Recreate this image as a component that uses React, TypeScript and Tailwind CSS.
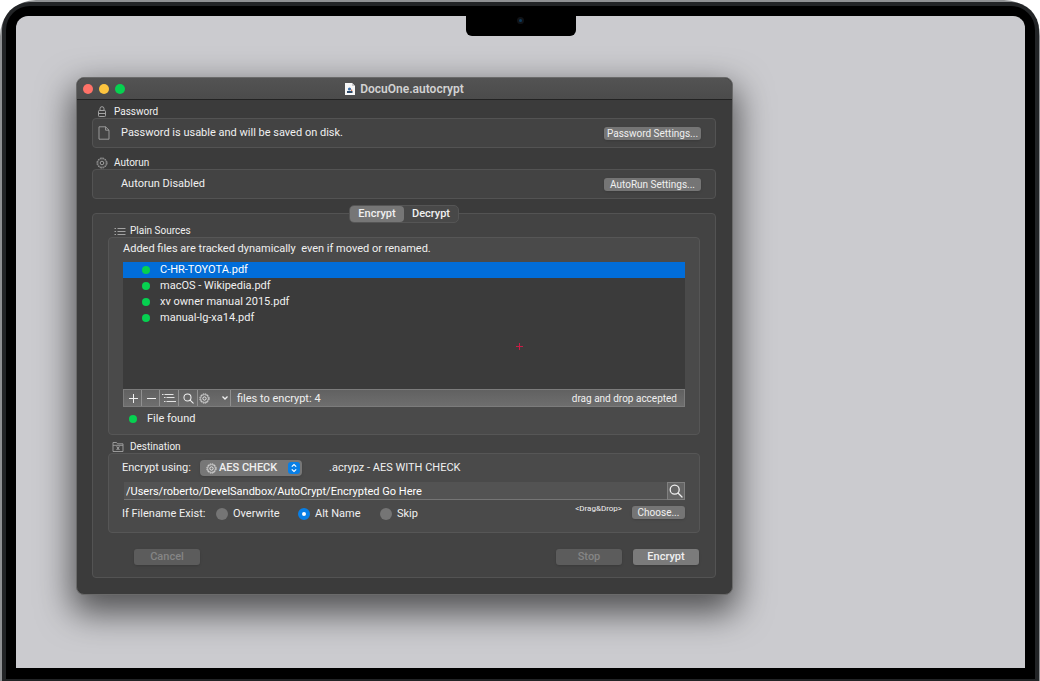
import { useState } from "react";
import type { ReactNode } from "react";

const files = [
  "C-HR-TOYOTA.pdf",
  "macOS - Wikipedia.pdf",
  "xv owner manual 2015.pdf",
  "manual-lg-xa14.pdf",
];

const conflictOptions = ["Overwrite", "Alt Name", "Skip"];

interface IconProps {
  className?: string;
}

function LockIcon({ className }: IconProps) {
  return (
    <svg viewBox="0 0 10 12" className={className} fill="none" stroke="currentColor" strokeWidth="1">
      <rect x="1.5" y="4.5" width="7" height="6" rx="0.8" />
      <path d="M3 4.5V2.7a2 2 0 0 1 4 0v1.800M2 7.500h6" />
    </svg>
  );
}

function PageIcon({ className }: IconProps) {
  return (
    <svg viewBox="0 0 12 14" className={className} fill="none" stroke="currentColor" strokeWidth="0.9">
      <path d="M1 .8h6.6L11 4.2v9H1zM7.6.8v3.4H11" />
    </svg>
  );
}

function GearIcon({ className }: IconProps) {
  return (
    <svg viewBox="0 0 12 12" className={className} fill="none" stroke="currentColor">
      <circle cx="6" cy="6" r="5" strokeWidth="1" strokeDasharray="1.8 0.8" />
      <circle cx="6" cy="6" r="4.2" strokeWidth="0.6" />
      <circle cx="6" cy="6" r="1.8" strokeWidth="1" />
    </svg>
  );
}

function ListIcon({ className }: IconProps) {
  return (
    <svg viewBox="0 0 12 9" className={className} fill="none" stroke="currentColor" strokeWidth="1">
      <path d="M0.5 1.5H2M3.5 1.5h8M0.5 4.5H2M3.5 4.5h8M0.5 7.5H2M3.5 7.5h8" />
    </svg>
  );
}

function OutlineIcon({ className }: IconProps) {
  return (
    <svg viewBox="0 0 14 10" className={className} fill="none" stroke="currentColor" strokeWidth="0.9">
      <path d="M0 1.5h1.5M2.5 1.5h9M2 4.5h1.5M4.5 4.5h8M2 8.5h1.5M4.5 8.5H14" />
    </svg>
  );
}

function SearchIcon({ className }: IconProps) {
  return (
    <svg viewBox="0 0 14 14" className={className} fill="none" stroke="currentColor" strokeWidth="1.3">
      <circle cx="5.7" cy="5.7" r="4.5" />
      <path d="m9 9 4 4" strokeLinecap="round" />
    </svg>
  );
}

function FolderIcon({ className }: IconProps) {
  return (
    <svg viewBox="0 0 12 12" className={className} fill="none" stroke="currentColor" strokeWidth="0.9">
      <path d="M1 10.5v-9h3.5l1 1.3H11v7.7zM1 4.3h10M4.5 5.5l3 3.5M7.5 5.5l-3 3.5M6 5.5v3.5" />
    </svg>
  );
}

function DocumentIcon({ className }: IconProps) {
  return (
    <svg viewBox="0 0 10 12" className={className}>
      <path d="M0 0h7l3 3v9H0z" fill="#f7f7f7" />
      <path d="M7 0v3h3z" fill="#c9c9c9" />
      <circle cx="4.5" cy="6" r="1.6" fill="#3c6fa8" />
      <path d="M2 8h5.5v2H2z" fill="#2f4a68" />
      <path d="M6 6.5h1.2V8H6z" fill="#d8784a" />
    </svg>
  );
}

function GroupTitle({ icon, children }: { icon: ReactNode; children: ReactNode }) {
  return (
    <h2 className="flex items-center gap-1 pl-0.5 text-[10px] leading-3">
      <span className="flex w-4 justify-center text-[#a3a3a3]">{icon}</span>
      {children}
    </h2>
  );
}

function SmallButton({ className, children }: { className: string; children: ReactNode }) {
  return (
    <button
      type="button"
      className={`h-[13px] shrink-0 rounded-[3px] bg-[#757575] text-[10px] leading-[13px] whitespace-nowrap shadow-sm ${className}`}
    >
      {children}
    </button>
  );
}

function ActionButton({ disabled, children }: { disabled?: boolean; children: ReactNode }) {
  return (
    <button
      type="button"
      disabled={disabled}
      className="h-4 w-[66px] rounded-[3px] bg-[#7b7b7b] text-[11px] leading-4 font-medium shadow-sm disabled:bg-[#5c5c5c] disabled:text-[#858585]"
    >
      {children}
    </button>
  );
}

function SourcesGroup() {
  const [selected, setSelected] = useState(0);

  return (
    <section className="mt-0.5">
      <GroupTitle icon={<ListIcon className="ml-1 h-[9px] w-3" />}>Plain Sources</GroupTitle>

      <div className="rounded border border-[#565656] bg-[#4a4a4a] px-[14px] pt-[3px] pb-[7px]">
        <p className="text-[11px] leading-4 whitespace-pre">
          Added files are tracked dynamically  even if moved or renamed.
        </p>

        <div className="relative mt-[5px] h-[127px] bg-[#3b3b3b]">
          <ul>
            {files.map((file, index) => (
              <li key={file}>
                <button
                  type="button"
                  onClick={() => setSelected(index)}
                  className={`flex h-4 w-full items-center gap-[10px] pl-[19px] text-[11px] leading-4 ${
                    selected === index ? "bg-[#016dd9] text-white" : ""
                  }`}
                >
                  <span className="size-2 rounded-full bg-[#06d150]" />
                  {file}
                </button>
              </li>
            ))}
          </ul>
          <svg viewBox="0 0 7 7" className="absolute top-[81px] left-[70%] size-[7px]" stroke="#c91c45">
            <path d="M3.5 0v7M0 3.5h7" />
          </svg>
        </div>

        <div className="flex h-[18px] items-stretch border border-[#7c7c7c] bg-linear-to-b from-[#616161] to-[#6e6e6e] text-[11px]">
          <button type="button" aria-label="Add file" className="flex w-[18px] items-center justify-center border-r border-[#909090]">
            <svg viewBox="0 0 10 10" className="size-[10px]" stroke="currentColor">
              <path d="M5.5 1v9M1 5.5h9" />
            </svg>
          </button>
          <button type="button" aria-label="Remove file" className="flex w-[18px] items-center justify-center border-r border-[#909090]">
            <svg viewBox="0 0 10 10" className="size-[10px]" stroke="currentColor">
              <path d="M1 5.5h9" />
            </svg>
          </button>
          <button type="button" aria-label="Show list" className="flex w-[19px] items-center justify-center border-r border-[#909090]">
            <OutlineIcon className="h-[10px] w-[14px]" />
          </button>
          <button type="button" aria-label="Reveal file" className="flex w-[19px] items-center justify-center border-r border-[#909090]">
            <SearchIcon className="size-[11px]" />
          </button>
          <button type="button" aria-label="More actions" className="flex w-[33px] items-center justify-between border-r border-[#909090] px-px">
            <GearIcon className="size-[11px]" />
            <svg viewBox="0 0 8 6" className="h-[6px] w-2" fill="none" stroke="currentColor" strokeWidth="1.3">
              <path d="m1.5 1.5 2.5 2.5 2.5-2.5" />
            </svg>
          </button>
          <span className="pl-[6px] leading-[18px]">files to encrypt: {files.length}</span>
          <span className="ml-auto pr-[7px] text-[10px] leading-[18px]">drag and drop accepted</span>
        </div>

        <div className="mt-1 flex items-center gap-[10px] pl-[6px] text-[11px] leading-4">
          <span className="size-2 rounded-full bg-[#06d150]" />
          File found
        </div>
      </div>
    </section>
  );
}

function DestinationGroup() {
  const [conflict, setConflict] = useState("Alt Name");
  const [path, setPath] = useState("/Users/roberto/DevelSandbox/AutoCrypt/Encrypted Go Here");

  return (
    <section className="mt-[6px]">
      <GroupTitle icon={<FolderIcon className="size-3" />}>Destination</GroupTitle>

      <div className="rounded border border-[#565656] bg-[#4a4a4a] pt-[6px] pr-[14px] pb-[10px] pl-[13px] text-[11px] leading-4">
        <div className="flex items-center">
          <label htmlFor="method" className="w-[78px]">
            Encrypt using:
          </label>
          <div className="relative">
            <select
              id="method"
              className="block h-4 w-[102px] appearance-none rounded bg-[#777777] pl-[19px] text-[11px] leading-4 font-medium shadow-sm"
            >
              <option>AES CHECK</option>
            </select>
            <GearIcon className="pointer-events-none absolute top-[3px] left-[6px] size-[11px]" />
            <span className="pointer-events-none absolute top-0.5 right-0.5 flex size-3 items-center justify-center rounded-[3px] bg-[#087fe6]">
              <svg viewBox="0 0 8 10" className="h-[10px] w-2" fill="none" stroke="white" strokeWidth="1.2">
                <path d="M1.8 3.6 4 1.5l2.2 2.1M1.8 6.4 4 8.5l2.2-2.1" />
              </svg>
            </span>
          </div>
          <span className="ml-[27px]">.acrypz - AES WITH CHECK</span>
        </div>

        <div className="mt-[6px] flex items-center pl-0.5">
          <input
            type="text"
            aria-label="Destination folder"
            value={path}
            onChange={(event) => setPath(event.target.value)}
            className="h-[18px] min-w-0 flex-1 border-b border-[#757575] bg-[#535353] pt-0.5 pl-0.5 text-[11px] text-white outline-none"
          />
          <button
            type="button"
            aria-label="Show in Finder"
            className="flex size-[18px] items-center justify-center border border-[#808080] bg-[#656565]"
          >
            <SearchIcon className="size-[14px]" />
          </button>
        </div>

        <div className="mt-[6px] flex items-start">
          <fieldset className="flex">
            <legend className="float-left w-[94px]">If Filename Exist:</legend>
            {conflictOptions.map((option) => (
              <label key={option} className="flex w-[82px] items-center gap-[5px]">
                <input
                  type="radio"
                  name="conflict"
                  checked={conflict === option}
                  onChange={() => setConflict(option)}
                  className="size-3 appearance-none rounded-full bg-[#757575] checked:border-4 checked:border-[#087fe6] checked:bg-white"
                />
                {option}
              </label>
            ))}
          </fieldset>
          <span className="ml-auto pr-[10px] text-[8px] leading-[6px]">&lt;Drag&amp;Drop&gt;</span>
          <SmallButton className="w-[53px]">Choose...</SmallButton>
        </div>
      </div>
    </section>
  );
}

function AutocryptWindow() {
  const [mode, setMode] = useState("Encrypt");

  return (
    <div className="w-full max-w-[657px] rounded-lg border border-[#6a6a6a] bg-[#3b3b3b] shadow-[0_14px_34px_4px_rgba(0,0,0,0.6)]">
      <header className="flex h-[22px] items-center rounded-t-lg border-b border-[#222222] bg-linear-to-b from-[#535353] to-[#4b4b4b] px-[6px]">
        <div className="flex flex-1 gap-[6px]">
          <button type="button" aria-label="Close" className="size-[10px] rounded-full bg-[#ff7268]" />
          <button type="button" aria-label="Minimize" className="size-[10px] rounded-full bg-[#fdc53f]" />
          <button type="button" aria-label="Zoom" className="size-[10px] rounded-full bg-[#06d150]" />
        </div>
        <h1 className="flex items-center gap-[5px] text-xs leading-4 font-semibold text-[#d2d2d2]">
          <DocumentIcon className="h-3 w-[10px]" />
          DocuOne.autocrypt
        </h1>
        <div className="flex-1" />
      </header>

      <div className="pt-[6px] pr-4 pb-4 pl-[15px]">
        <section>
          <GroupTitle icon={<LockIcon className="h-3 w-[10px]" />}>Password</GroupTitle>
          <div className="flex items-center rounded border border-[#535353] bg-[#434343] py-[5px] pr-[14px] pl-[5px] text-[11px]">
            <span className="w-[23px] text-[#a3a3a3]">
              <PageIcon className="h-[14px] w-3" />
            </span>
            <span className="flex-1 leading-[18px]">Password is usable and will be saved on disk.</span>
            <SmallButton className="w-[97px]">Password Settings...</SmallButton>
          </div>
        </section>

        <section className="mt-[9px]">
          <GroupTitle icon={<GearIcon className="size-3" />}>Autorun</GroupTitle>
          <div className="flex items-center rounded border border-[#535353] bg-[#434343] py-[5px] pr-[14px] pl-7 text-[11px]">
            <span className="flex-1 leading-[18px]">Autorun Disabled</span>
            <SmallButton className="w-[97px]">AutoRun Settings...</SmallButton>
          </div>
        </section>

        <div className="mt-[14px] rounded border border-[#535353] bg-[#434343] px-[15px] pb-3">
          <div className="-mt-[9px] flex justify-center">
            <div role="tablist" className="flex rounded-[5px] border border-[#555555] bg-[#484848] text-[11px] leading-4">
              {["Encrypt", "Decrypt"].map((item) => (
                <button
                  key={item}
                  type="button"
                  role="tab"
                  aria-selected={mode === item}
                  onClick={() => setMode(item)}
                  className={`w-[54px] rounded font-medium ${mode === item ? "bg-[#767676]" : ""}`}
                >
                  {item}
                </button>
              ))}
            </div>
          </div>

          <SourcesGroup />
          <DestinationGroup />

          <div className="mt-4 flex gap-[11px] pr-px pl-[26px]">
            <div className="flex flex-1">
              <ActionButton disabled>Cancel</ActionButton>
            </div>
            <ActionButton disabled>Stop</ActionButton>
            <ActionButton>Encrypt</ActionButton>
          </div>
        </div>
      </div>
    </div>
  );
}

function App() {
  return (
    <div className="flex min-h-screen bg-white font-[Roboto,sans-serif] text-[#f0f0f0]">
      {/* laptop body, running off the bottom of the page */}
      <div className="flex flex-1 rounded-t-[36px] bg-[#8f9193] pt-0.5 pr-px pl-0.5">
        <div className="flex flex-1 rounded-t-[28px] bg-[#222426] px-1 pt-1 pb-0.5">
          <div className="relative flex flex-1 rounded-t-3xl bg-black px-[10px] pt-[10px] pb-[11px]">
            <div className="absolute top-[10px] left-1/2 flex h-5 w-[110px] -translate-x-1/2 justify-center rounded-b-md bg-black">
              <span className="mt-px size-[7px] rounded-full border-2 border-[#111317] bg-[#0d3a5c]" />
            </div>
            <main className="flex-1 rounded-t-xl bg-[#cbcbcf] pt-[61px] pr-4 pb-8 pl-[60px]">
              <AutocryptWindow />
            </main>
          </div>
        </div>
      </div>
    </div>
  );
}

export default App;
